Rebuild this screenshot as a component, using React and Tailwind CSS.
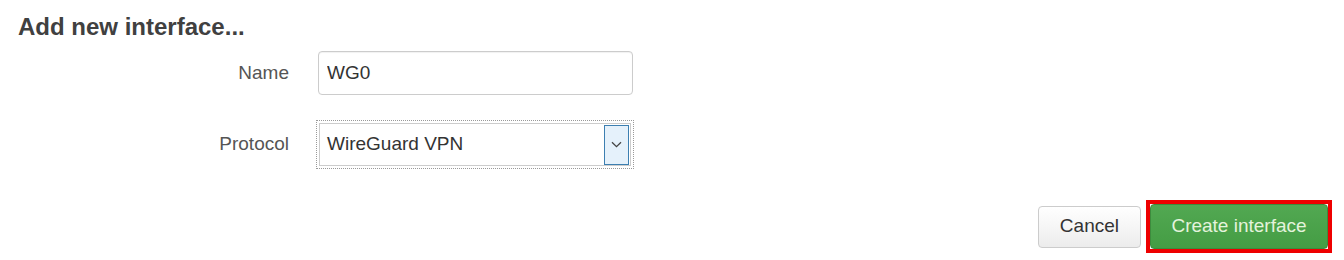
import { useState } from "react";

// Field row: label on the left, control on the right
const Field = ({ label, children, className = "" }) => (
  <div className={`flex items-center ${className}`}>
    <label className="w-[289px] text-right text-[19px] text-[#555]">
      {label}
    </label>
    <div className="ml-[29px]">{children}</div>
  </div>
);

export default function App() {
  const [name, setName] = useState("WG0");

  return (
    <div className="w-[1344px] h-[260px] bg-white font-['Liberation_Sans',Arial,sans-serif] text-[#333] overflow-hidden">
      <h3 className="pt-[14px] pl-[18px] text-[24px] leading-[26px] font-bold text-[#404040]">
        Add new interface...
      </h3>

      <Field label="Name" className="mt-[11px]">
        <input
          value={name}
          onChange={(e) => setName(e.target.value)}
          className="w-[315px] h-[44px] px-[8px] border border-[#ccc] rounded-[4px] text-[19px] text-[#333] shadow-[inset_0_1px_1px_rgba(0,0,0,0.06)] outline-none"
        />
      </Field>

      <Field label="Protocol" className="mt-[25px]">
        <div className="-ml-[2px] p-[2px] border border-dotted border-[#999]">
          <div className="flex items-center w-[312px] h-[43px] border border-[#ccc] bg-white pl-[7px] pr-[1px]">
            <span className="flex-1 text-[19px] text-[#333]">WireGuard VPN</span>
            <div className="flex items-center justify-center w-[25px] h-[40px] bg-[#e5f1fb] border border-[#3c7fb1]">
              <svg width="11" height="7" viewBox="0 0 11 7" fill="none">
                <path d="M1 1.2l4.5 4.5 4.5-4.5" stroke="#444" strokeWidth="1.3" />
              </svg>
            </div>
          </div>
        </div>
      </Field>

      <div className="flex justify-end items-center mt-[31px] pr-[12px]">
        <button className="h-[42px] px-[21px] mr-[5px] border border-[#ccc] rounded-[4px] bg-gradient-to-b from-white to-[#ececec] text-[19px] text-[#333]">
          Cancel
        </button>
        <div className="border-4 border-[#ee0000]">
          <button className="block h-[45px] w-[178px] rounded-[4px] border border-[#3d8b3d] bg-gradient-to-b from-[#52a852] to-[#449d44] text-[19px] text-[#e4f3dc]">
            Create interface
          </button>
        </div>
      </div>
    </div>
  );
}
